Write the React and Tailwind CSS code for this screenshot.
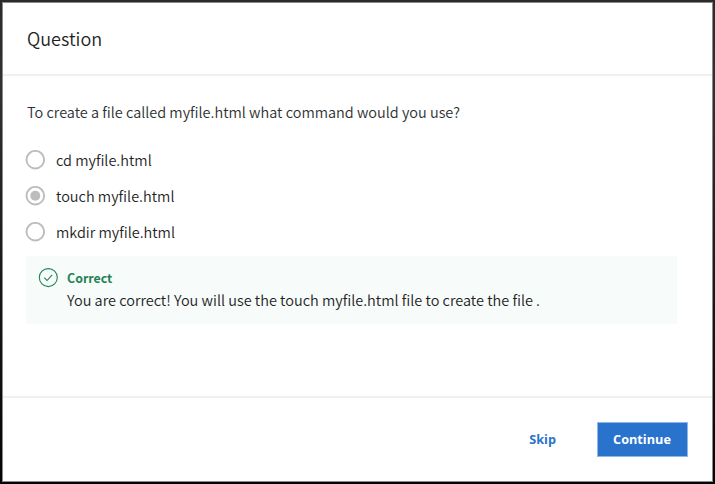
const options = [
  { label: 'cd myfile.html', selected: false },
  { label: 'touch myfile.html', selected: true },
  { label: 'mkdir myfile.html', selected: false },
];

function Radio({ selected }) {
  return (
    <svg className="size-5 shrink-0" viewBox="0 0 20 20" fill="none">
      <circle cx="10.3" cy="9.7" r="8.8" stroke="#bdbdbd" strokeWidth="1.9" />
      {selected && <circle cx="10.3" cy="9.7" r="5" fill="#bdbdbd" />}
    </svg>
  );
}

export default function App() {
  return (
    <div className="h-[484px] w-[715px] bg-[linear-gradient(to_bottom,#2d2b2a,#33302f_18%,#1b1715_60%,#050404)] p-0.5 font-['Noto_Sans_CJK_SC','Noto_Sans',sans-serif] text-[#1f1f1f]">
      <div className="flex h-[480px] w-[711px] flex-col border border-[#8a8a8a] bg-white">
        <header className="flex h-[73px] shrink-0 items-center border-b-2 border-[#f0f0f0] pb-0.5 pl-6">
          <h1 className="text-[18px] leading-6 font-[350]">Question</h1>
        </header>
        <main className="flex-1 pt-6 pl-6 font-[350]">
          <p className="text-[14.47px] leading-6 whitespace-nowrap text-[#2d3032]">
            To create a file called myfile.html what command would you use?
          </p>
          <div className="mt-[26px] -ml-0.5 flex flex-col gap-4">
            {options.map((o) => (
              <label key={o.label} className="flex h-5 items-center gap-[11px]">
                <Radio selected={o.selected} />
                <span className="text-[14.49px] leading-5 whitespace-nowrap">{o.label}</span>
              </label>
            ))}
          </div>
          <div className="mt-[14px] -ml-px flex h-[68px] w-[651px] gap-2 bg-[#f7fbfa] pt-3 pl-3">
            <svg className="size-5 shrink-0" viewBox="0 0 20 20" fill="none" stroke="#1f8354">
              <circle cx="10.3" cy="9.6" r="9" strokeWidth="1.1" />
              <path d="M6.2 9.7l2.8 2.8 5.2-5.7" strokeWidth="1.1" />
            </svg>
            <div className="pl-px">
              <p className="text-[12.4px] leading-5 font-bold text-[#1f8354]">Correct</p>
              <p className="text-[14.49px] leading-6 whitespace-nowrap">
                You are correct! You will use the touch myfile.html file to create the file .
              </p>
            </div>
          </div>
        </main>
        <footer className="flex h-[85px] shrink-0 items-center justify-end gap-[41px] border-t-2 border-[#f0f0f0] pr-6 font-['Open_Sans',sans-serif] text-[12.7px] font-bold">
          <button className="text-[#2a73cc]">Skip</button>
          <button className="h-[35px] w-[91px] border border-[#8fb6e6] bg-[#2a73cc] pr-px text-white">Continue</button>
        </footer>
      </div>
    </div>
  );
}
